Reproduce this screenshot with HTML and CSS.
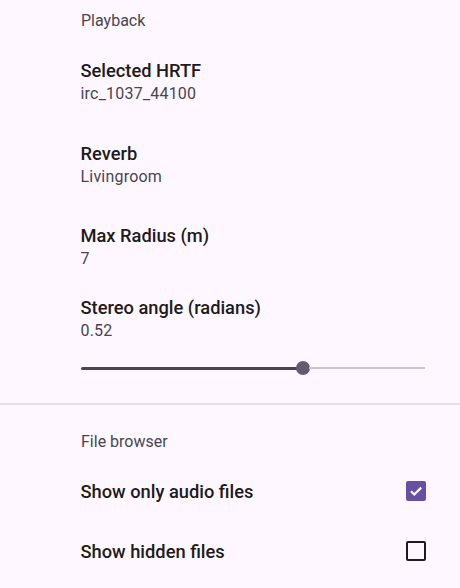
FILE: index.html
```html
<!DOCTYPE html>
<html>
<head>
<meta charset="utf-8">
<link rel="stylesheet" href="styles.css">
</head>
<body>
<div class="screen">
  <div class="category">Playback</div>
  <div class="pref">
    <div class="title">Selected HRTF</div>
    <div class="summary">irc_1037_44100</div>
  </div>
  <div class="pref">
    <div class="title">Reverb</div>
    <div class="summary">Livingroom</div>
  </div>
  <div class="pref">
    <div class="title">Max Radius (m)</div>
    <div class="summary">7</div>
  </div>
  <div class="pref slider-pref">
    <div class="title">Stereo angle (radians)</div>
    <div class="summary">0.52</div>
    <div class="slider">
      <div class="track-active" style="width: 221px"></div>
      <div class="thumb"></div>
      <div class="track-inactive"></div>
    </div>
  </div>
  <div class="divider"></div>
  <div class="category category-second">File browser</div>
  <div class="pref check-pref">
    <div class="title">Show only audio files</div>
    <div class="checkbox checked">
      <svg viewBox="0 0 20 20" width="20" height="20"><path d="M5 10.2l3.3 3.3L15.2 6.6" fill="none" stroke="#fff" stroke-width="2.2"/></svg>
    </div>
  </div>
  <div class="pref check-pref">
    <div class="title">Show hidden files</div>
    <div class="checkbox"></div>
  </div>
</div>
</body>
</html>
```
FILE: styles.css
```css
html, body {
  margin: 0;
  padding: 0;
  background: #fef7ff;
}
.screen {
  width: 460px;
  height: 588px;
  overflow: hidden;
  font-family: Roboto, "Noto Sans", sans-serif;
  color: #1d1b20;
}
.category {
  padding: 11px 0 10px 81px;
  font-size: 16px;
  line-height: 20px;
  font-weight: 400;
  color: #49454f;
}
.category-second {
  padding-top: 27px;
  padding-bottom: 10px;
}
.pref {
  padding: 18.3px 34px 18.3px 80.5px;
}
.title {
  font-size: 18.3px;
  line-height: 24px;
  font-weight: 500;
  color: #1d1b20;
}
.summary {
  font-size: 16px;
  line-height: 22px;
  color: #49454f;
  letter-spacing: 0.2px;
}
.slider-pref {
  padding-top: 7.4px;
  padding-bottom: 0;
}
.slider {
  display: flex;
  align-items: center;
  height: 40px;
  margin-top: 6px;
  margin-left: 0.5px;
  margin-right: 1px;
}
.track-active {
  height: 3px;
  background: #4a4458;
  border-radius: 2px;
}
.thumb {
  width: 14px;
  height: 14px;
  border-radius: 50%;
  background: #625b71;
  margin-left: -6px;
  margin-right: -1px;
}
.track-inactive {
  flex: 1;
  height: 2px;
  background: #cac4d0;
}
.divider {
  height: 2px;
  background: #e7e0ea;
  margin-top: 15px;
}
.check-pref {
  display: flex;
  align-items: center;
  justify-content: space-between;
  padding-top: 18px;
  padding-bottom: 18px;
}
.checkbox {
  width: 16px;
  height: 16px;
  border: 2px solid #1d1b20;
  border-radius: 2px;
  margin-bottom: 2px;
  position: relative;
}
.checkbox.checked {
  background: #6750a4;
  border-color: #6750a4;
}
.checkbox svg {
  position: absolute;
  left: -2px;
  top: -2px;
}
```
